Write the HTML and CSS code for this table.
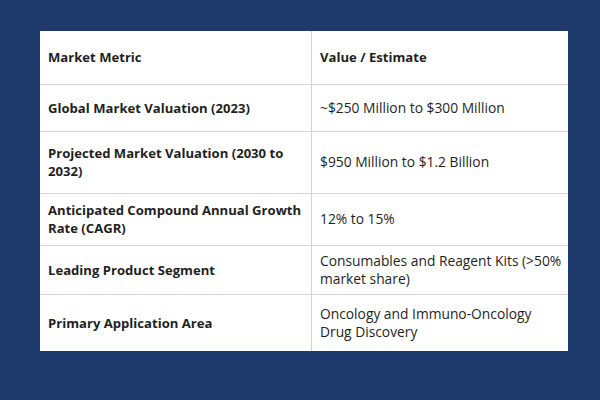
FILE: index.html
```html
<!DOCTYPE html>
<html>
<head>
<meta charset="utf-8">
<link rel="stylesheet" href="styles.css">
</head>
<body>
<div class="page">
  <table class="metrics">
    <tr class="r1"><th>Market Metric</th><th>Value / Estimate</th></tr>
    <tr class="r2"><td class="k">Global Market Valuation (2023)</td><td>~$250 Million to $300 Million</td></tr>
    <tr class="r3"><td class="k">Projected Market Valuation (2030 to 2032)</td><td>$950 Million to $1.2 Billion</td></tr>
    <tr class="r4"><td class="k">Anticipated Compound Annual Growth Rate (CAGR)</td><td>12% to 15%</td></tr>
    <tr class="r5"><td class="k">Leading Product Segment</td><td>Consumables and Reagent Kits (&gt;50% market share)</td></tr>
    <tr class="r6"><td class="k">Primary Application Area</td><td>Oncology and Immuno-Oncology Drug Discovery</td></tr>
  </table>
</div>
</body>
</html>
```
FILE: styles.css
```css
html, body { margin: 0; padding: 0; }
body {
  width: 600px;
  height: 400px;
  background: #1e3a6c;
  font-family: "Open Sans", "Liberation Sans", sans-serif;
  color: #1f1f1f;
}
.page {
  padding: 31px 0 0 40px;
}
.metrics {
  width: 528px;
  border-collapse: collapse;
  background: #ffffff;
  table-layout: fixed;
}
.metrics th, .metrics td {
  border: 1px solid #d3d3d3;
  padding: 0 3px 0 8px;
  text-align: left;
  vertical-align: middle;
  font-size: 13.8px;
  line-height: 18px;
}
.metrics th:first-child, .metrics td:first-child { width: 260px; }
.metrics th, .metrics td.k { font-weight: 700; font-size: 13.1px; }
.metrics td { font-weight: 400; }
.metrics tr:first-child th { border-top: none; }
.metrics tr > :first-child { border-left: none; }
.metrics tr > :last-child { border-right: none; }
.metrics tr:last-child > * { border-bottom: none; }
.r1 { height: 53px; }
.r2 { height: 47px; }
.r3 { height: 62px; }
.r4 { height: 52px; }
.r5 { height: 49px; }
.r6 { height: 57px; }
```
